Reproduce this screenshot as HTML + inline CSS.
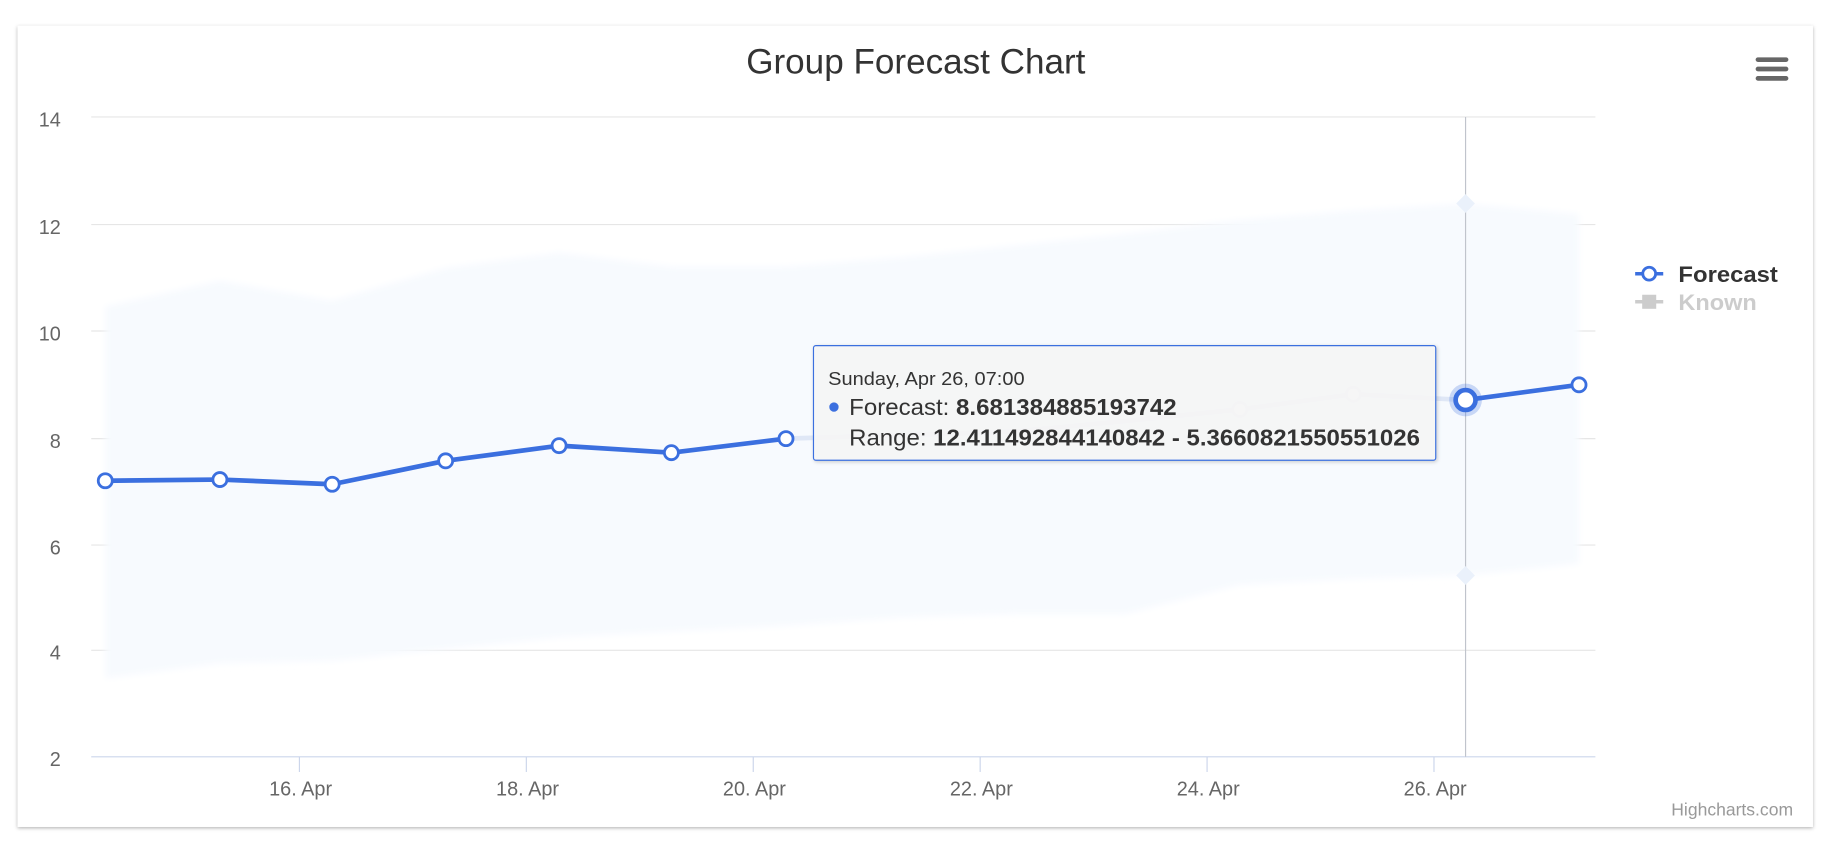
<!DOCTYPE html>
<html><head><meta charset="utf-8"><style>
html,body{margin:0;padding:0;background:#fff;width:1834px;height:850px;overflow:hidden}
svg{display:block}
text{font-family:"Liberation Sans",Arial,sans-serif}
</style></head><body>
<svg width="1834" height="850" viewBox="0 0 1568 726.7" preserveAspectRatio="none">
<defs><filter id="sh" x="-5%" y="-5%" width="110%" height="110%"><feDropShadow dx="0" dy="1" stdDeviation="1.5" flood-color="#000" flood-opacity="0.3"/></filter>
<filter id="ts"><feDropShadow dx="1" dy="1" stdDeviation="1.5" flood-color="#000" flood-opacity="0.2"/></filter>
<filter id="bl"><feGaussianBlur stdDeviation="3"/></filter></defs>
<rect x="15" y="22" width="1535" height="685" fill="#fff" filter="url(#sh)"/>
<text x="783" y="63" font-size="30" fill="#333" text-anchor="middle">Group Forecast Chart</text>
<g fill="#666"><rect x="1501" y="49" width="28" height="4" rx="2"/><rect x="1501" y="57" width="28" height="4" rx="2"/><rect x="1501" y="65" width="28" height="4" rx="2"/></g>
<g stroke="#e6e6e6" stroke-width="1">
<line x1="78" x2="1364" y1="100" y2="100"/><line x1="78" x2="1364" y1="192" y2="192"/><line x1="78" x2="1364" y1="283" y2="283"/><line x1="78" x2="1364" y1="375" y2="375"/><line x1="78" x2="1364" y1="466" y2="466"/><line x1="78" x2="1364" y1="556" y2="556"/></g>
<line x1="78" x2="1364" y1="647" y2="647" stroke="#ccd6eb"/>
<g stroke="#ccd6eb"><line x1="256" x2="256" y1="647" y2="660"/><line x1="450" x2="450" y1="647" y2="660"/><line x1="644" x2="644" y1="647" y2="660"/><line x1="838" x2="838" y1="647" y2="660"/><line x1="1032" x2="1032" y1="647" y2="660"/><line x1="1226" x2="1226" y1="647" y2="660"/></g>
<g font-size="17" fill="#666" text-anchor="end"><text x="52" y="108">14</text><text x="52" y="200">12</text><text x="52" y="291">10</text><text x="52" y="383">8</text><text x="52" y="474">6</text><text x="52" y="564">4</text><text x="52" y="655">2</text></g>
<g font-size="17" fill="#666" text-anchor="middle"><text x="257" y="680">16. Apr</text><text x="451" y="680">18. Apr</text><text x="645" y="680">20. Apr</text><text x="839" y="680">22. Apr</text><text x="1033" y="680">24. Apr</text><text x="1227" y="680">26. Apr</text></g>
<path d="M90 262 L188 240 L284 257 L381 229 L478 216 L574 228 L672 228 L770 220 L866 210 L962 200 L1060 188 L1157 180 L1253 174 L1350 183 L1350 482 L1253 492 L1157 495 L1060 500 L962 525 L866 525 L770 528 L672 535 L574 540 L478 545 L381 555 L284 565 L188 567 L90 580 Z" fill="#f7fafe" filter="url(#bl)"/>
<line x1="1253" x2="1253" y1="100" y2="647" stroke="#c0c4cc" stroke-width="1"/>
<g fill="#eaf1fb"><path d="M1253 166 L1261 174 L1253 182 L1245 174Z"/><path d="M1253 484 L1261 492 L1253 500 L1245 492Z"/></g>
<polyline points="672,375 770,372 866,369 962,360 1060,350 1157,337 1253,342" fill="none" stroke="#dfe7f6" stroke-width="4"/>
<polyline points="90,411 188,410 284,414 381,394 478,381 574,387 672,375" fill="none" stroke="#3b6fdf" stroke-width="4" stroke-linejoin="round"/>
<polyline points="1253,342 1350,329" fill="none" stroke="#3b6fdf" stroke-width="4"/>
<g fill="#fff" stroke="#3b6fdf" stroke-width="2.4">
<circle cx="90" cy="411" r="6"/><circle cx="188" cy="410" r="6"/><circle cx="284" cy="414" r="6"/><circle cx="381" cy="394" r="6"/><circle cx="478" cy="381" r="6"/><circle cx="574" cy="387" r="6"/><circle cx="672" cy="375" r="6"/><circle cx="1350" cy="329" r="6"/></g>
<g fill="#fff" stroke="#dfe7f6" stroke-width="2.4"><circle cx="1060" cy="350" r="6"/><circle cx="1157" cy="337" r="6"/></g>
<circle cx="1253" cy="342" r="14" fill="#3b6fdf" opacity="0.25"/>
<circle cx="1253" cy="342" r="8.5" fill="#fff" stroke="#3b6fdf" stroke-width="4"/>
<rect x="695.5" y="295.5" width="532" height="98" fill="rgba(247,247,247,0.92)" stroke="#3b6fdf" stroke-width="1" rx="2" filter="url(#ts)"/>
<text x="708" y="329" font-size="16" fill="#333" textLength="168" lengthAdjust="spacingAndGlyphs">Sunday, Apr 26, 07:00</text>
<circle cx="713" cy="348" r="4" fill="#3b6fdf"/>
<text x="726" y="355" font-size="20" fill="#333" textLength="280" lengthAdjust="spacingAndGlyphs">Forecast: <tspan font-weight="bold">8.681384885193742</tspan></text>
<text x="726" y="381" font-size="20" fill="#333" textLength="488" lengthAdjust="spacingAndGlyphs">Range: <tspan font-weight="bold">12.411492844140842 - 5.3660821550551026</tspan></text>
<line x1="1398" x2="1422" y1="234" y2="234" stroke="#3b6fdf" stroke-width="3"/>
<circle cx="1410" cy="234" r="5.5" fill="#fff" stroke="#3b6fdf" stroke-width="2.4"/>
<text x="1435" y="241" font-size="19" font-weight="bold" fill="#333" textLength="85" lengthAdjust="spacingAndGlyphs">Forecast</text>
<line x1="1398" x2="1422" y1="258" y2="258" stroke="#ccc" stroke-width="3"/>
<rect x="1404" y="252" width="12" height="12" fill="#ccc"/>
<text x="1435" y="265" font-size="19" font-weight="bold" fill="#ccc" textLength="67" lengthAdjust="spacingAndGlyphs">Known</text>
<text x="1533" y="697" font-size="15" fill="#999" text-anchor="end">Highcharts.com</text>
</svg>
</body></html>
